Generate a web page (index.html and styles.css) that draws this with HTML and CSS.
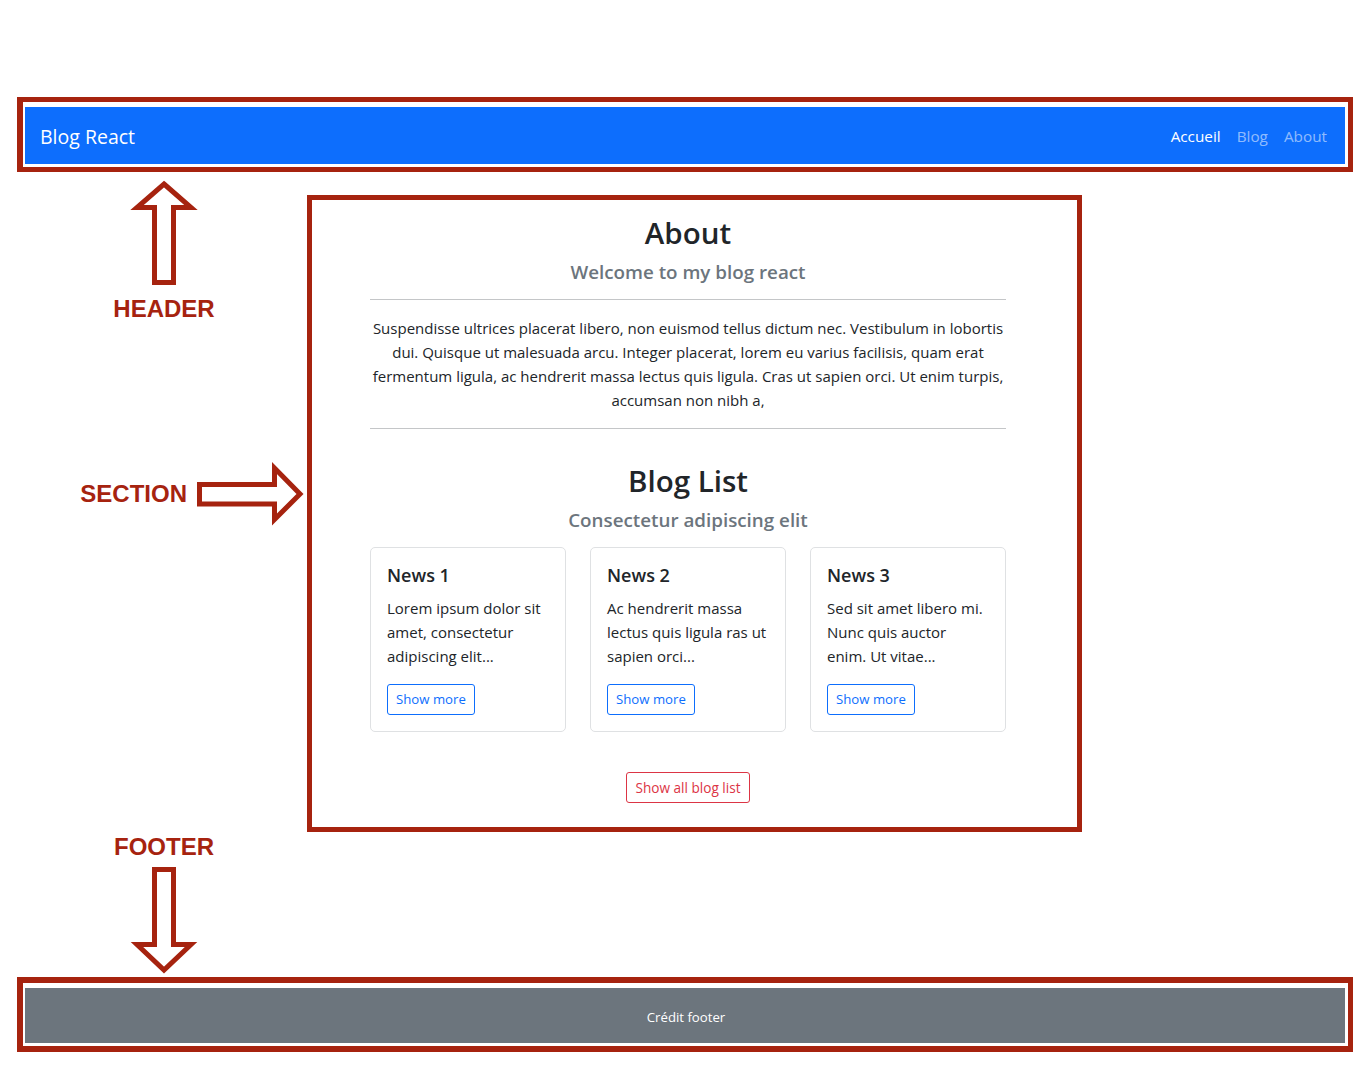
FILE: index.html
```html
<!DOCTYPE html>
<html lang="fr">
<head>
<meta charset="utf-8">
<title>Blog React - structure</title>
<link rel="stylesheet" href="styles.css">
</head>
<body>
  <div class="frame frame-header">
    <nav class="navbar">
      <a class="brand" href="#">Blog React</a>
      <ul class="nav">
        <li><a class="nav-link active" href="#">Accueil</a></li>
        <li><a class="nav-link" href="#">Blog</a></li>
        <li><a class="nav-link" href="#">About</a></li>
      </ul>
    </nav>
  </div>

  <div class="middle">
    <aside class="notes">
      <div class="note-up">
        <svg class="arrow" width="70" height="110" viewBox="129 178 70 110">
          <polygon points="164,184 191,207.5 173.5,207.5 173.5,282.5 154.5,282.5 154.5,207.5 137,207.5" />
        </svg>
        <span class="note-label note-label-header">HEADER</span>
      </div>
      <div class="note-right">
        <span class="note-label">SECTION</span>
        <svg class="arrow" width="112" height="66" viewBox="194 459 112 66">
          <polygon points="199.5,482.5 274.5,482.5 274.5,466 300,492 274.5,517.5 274.5,502 199.5,502" />
        </svg>
      </div>
    </aside>

    <main class="frame-section">
      <div class="content">
        <h2 class="title">About</h2>
        <h5 class="subtitle">Welcome to my blog react</h5>
        <hr class="rule">
        <p class="about-text">Suspendisse ultrices placerat libero, non euismod tellus dictum nec. Vestibulum in lobortis<br>dui. Quisque ut malesuada arcu. Integer placerat, lorem eu varius facilisis, quam erat<br>fermentum ligula, ac hendrerit massa lectus quis ligula. Cras ut sapien orci. Ut enim turpis,<br>accumsan non nibh a,</p>
        <hr class="rule">
        <h2 class="title title-list">Blog List</h2>
        <h5 class="subtitle">Consectetur adipiscing elit</h5>
        <div class="cards">
          <article class="card">
            <h5 class="card-title">News 1</h5>
            <p class="card-text">Lorem ipsum dolor sit<br>amet, consectetur<br>adipiscing elit...</p>
            <a class="btn btn-primary" href="#">Show more</a>
          </article>
          <article class="card">
            <h5 class="card-title">News 2</h5>
            <p class="card-text">Ac hendrerit massa<br>lectus quis ligula ras ut<br>sapien orci...</p>
            <a class="btn btn-primary" href="#">Show more</a>
          </article>
          <article class="card">
            <h5 class="card-title">News 3</h5>
            <p class="card-text">Sed sit amet libero mi.<br>Nunc quis auctor<br>enim. Ut vitae...</p>
            <a class="btn btn-primary" href="#">Show more</a>
          </article>
        </div>
        <div class="all-row">
          <a class="btn btn-danger" href="#">Show all blog list</a>
        </div>
      </div>
    </main>
  </div>

  <div class="note-down">
    <span class="note-label">FOOTER</span>
    <svg class="arrow" width="70" height="110" viewBox="129 865 70 110">
      <polygon points="154.5,870.5 173.5,870.5 173.5,945.5 191,945.5 164,971 137,945.5 154.5,945.5" />
    </svg>
  </div>

  <div class="frame frame-footer">
    <footer class="footer">Crédit footer</footer>
  </div>
</body>
</html>
```

FILE: styles.css
```css
* {
  box-sizing: border-box;
}

html, body {
  margin: 0;
  padding: 0;
  background: #ffffff;
}

body {
  padding-top: 97px;
  font-family: "Open Sans", "Noto Sans", sans-serif;
  color: #212529;
  width: 1370px;
}

a {
  text-decoration: none;
}

/* ---------- annotation frames ---------- */
.frame {
  margin: 0 17px;
  border-style: solid;
  border-color: #a6230f;
  background: #ffffff;
}

.frame-header {
  border-width: 5px 5px 5px 6px;
  padding: 5px 3px 3px 2px;
}

.frame-footer {
  margin-top: 3px;
  border-width: 6px 5px 6px 6px;
  padding: 5px 3px 3px 2px;
}

/* ---------- navbar ---------- */
.navbar {
  height: 57px;
  background: #0d6efd;
  display: flex;
  align-items: center;
  justify-content: space-between;
  padding: 0 10px 0 15px;
}

.brand {
  color: #ffffff;
  font-size: 19.5px;
  line-height: 24px;
  margin-top: 2px;
}

.nav {
  list-style: none;
  margin: 0;
  padding: 0;
  display: flex;
}

.nav-link {
  display: block;
  padding: 0 8px;
  font-size: 15.3px;
  line-height: 22px;
  color: rgba(255, 255, 255, 0.55);
}

.nav-link.active {
  color: #ffffff;
}

/* ---------- middle ---------- */
.middle {
  display: flex;
  align-items: flex-start;
}

.notes {
  width: 307px;
  flex: none;
  display: flex;
  flex-direction: column;
}

.arrow {
  display: block;
  flex: none;
}

.arrow polygon {
  fill: #ffffff;
  stroke: #a6230f;
  stroke-width: 5;
  stroke-linejoin: miter;
}

.note-label {
  font-family: "Liberation Sans", Arial, sans-serif;
  font-weight: 700;
  font-size: 24px;
  line-height: 28px;
  color: #a6230f;
  white-space: nowrap;
}

.note-up {
  margin-top: 6px;
  margin-left: 64px;
  width: 200px;
  display: flex;
  flex-direction: column;
  align-items: center;
}

.note-label-header {
  margin-top: 7px;
}

.note-right {
  margin-top: 138px;
  width: 306px;
  display: flex;
  align-items: center;
  justify-content: flex-end;
  gap: 7px;
}

.note-down {
  margin-top: 1px;
  margin-left: 64px;
  width: 200px;
  display: flex;
  flex-direction: column;
  align-items: center;
  gap: 3px;
}

/* ---------- section ---------- */
.frame-section {
  margin-top: 23px;
  width: 775px;
  border: 5px solid #a6230f;
  padding: 15px 0 24px 58px;
}

.content {
  width: 636px;
  text-align: center;
}

.title {
  margin: 0;
  font-size: 29.5px;
  line-height: 36px;
  font-weight: 600;
  color: #212529;
}

.title-list {
  margin-top: 34px;
}

.subtitle {
  margin: 10px 0 0;
  font-size: 18.8px;
  line-height: 22px;
  font-weight: 600;
  color: #6c757d;
}

.rule {
  margin: 16px 0 0;
  border: 0;
  border-top: 1px solid #c4c6c8;
  height: 0;
}

.about-text {
  margin: 16px 0 0;
  font-size: 15px;
  line-height: 24px;
  white-space: nowrap;
}

.cards {
  margin-top: 16px;
  display: grid;
  grid-template-columns: repeat(3, 196px);
  gap: 24px;
  text-align: left;
}

.card {
  border: 1px solid #dfe1e3;
  border-radius: 5px;
  padding: 16px;
  display: flex;
  flex-direction: column;
  align-items: flex-start;
}

.card-title {
  margin: 0 0 10px;
  font-size: 18px;
  line-height: 22px;
  font-weight: 600;
  color: #212529;
}

.card-text {
  margin: 0 0 16px;
  font-size: 15px;
  line-height: 24px;
  white-space: nowrap;
  color: #212529;
}

.btn {
  display: inline-block;
  border: 1px solid;
  border-radius: 3px;
  padding: 4px 8px;
  font-size: 13.2px;
  line-height: 21px;
  background: #ffffff;
}

.btn-primary {
  color: #0d6efd;
  border-color: #0d6efd;
}

.btn-danger {
  color: #dc3545;
  border-color: #dc3545;
  font-size: 13.6px;
}

.all-row {
  margin-top: 40px;
  display: flex;
  justify-content: center;
}

/* ---------- footer ---------- */
.footer {
  height: 55px;
  background: #6c757d;
  color: #ffffff;
  font-size: 13.2px;
  display: flex;
  align-items: center;
  justify-content: center;
  padding-left: 2px;
  padding-top: 2px;
}
```
